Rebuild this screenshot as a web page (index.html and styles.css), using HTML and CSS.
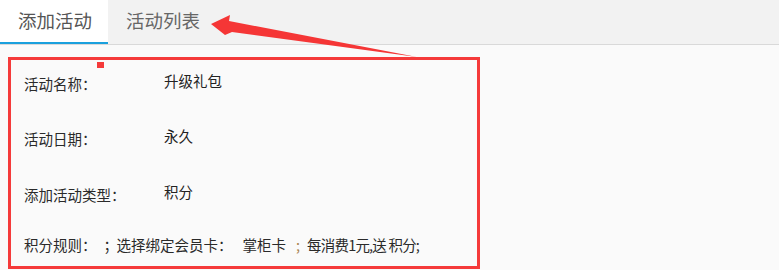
FILE: index.html
```html
<!DOCTYPE html>
<html lang="zh-CN">
<head>
<meta charset="utf-8">
<title>活动</title>
<link rel="stylesheet" href="styles.css">
</head>
<body>
<div class="page">
  <div class="tabs">
    <div class="tab active">添加活动</div>
    <div class="tab">活动列表</div>
  </div>
  <div class="content">
    <div class="row row-1">
      <div class="label">活动名称：</div>
      <div class="value">升级礼包</div>
    </div>
    <div class="row row-2">
      <div class="label">活动日期：</div>
      <div class="value">永久</div>
    </div>
    <div class="row row-3">
      <div class="label">添加活动类型：</div>
      <div class="value">积分</div>
    </div>
    <div class="row row-4">
      <div class="rule"><span>积分规则：</span><span class="sep1">；</span><span>选择绑定会员卡：</span><span class="card">掌柜卡</span><span class="sep2">;</span><span class="tail">每消费1元,送 积分;</span></div>
    </div>
  </div>
  <div class="mark-box"></div>
  <div class="mark-dot"></div>
  <svg class="mark-arrow" width="779" height="270" viewBox="0 0 779 270">
    <polygon points="211,24 230,15 229,21 417,57 232,32 225,35" fill="#f53636"/>
  </svg>
</div>
</body>
</html>
```
FILE: styles.css
```css
html, body {
  margin: 0;
  padding: 0;
  background: #fafafa;
}
.page {
  position: relative;
  width: 779px;
  height: 270px;
  overflow: hidden;
  font-family: "Noto Sans CJK SC", "Noto Sans", sans-serif;
}
.tabs {
  display: flex;
  height: 44px;
  background: #f2f2f2;
  border-bottom: 1px solid #d9d9d9;
}
.tab {
  box-sizing: border-box;
  height: 44px;
  padding: 0 18px;
  font-size: 18.5px;
  line-height: 40px;
  color: #666;
  white-space: nowrap;
}
.tab.active {
  width: 108px;
  background: #fff;
  border-bottom: 2px solid #1aa0dd;
  color: #555;
}
.content {
  padding: 26px 0 0 24px;
  color: #2a2a2a;
  font-size: 14.5px;
}
.row {
  display: flex;
  align-items: flex-start;
}
.row-1 { height: 55px; }
.row-2 { height: 56px; }
.row-3 { height: 50px; }
.label {
  width: 140px;
  padding-top: 3px;
  line-height: 20px;
}
.value {
  line-height: 20px;
  color: #222;
}
.rule {
  padding-top: 3px;
  line-height: 20px;
  white-space: pre;
}
.sep1 {
  display: inline-block;
  width: 13px;
  margin-left: 7px;
  overflow: hidden;
  vertical-align: top;
}
.card {
  margin-left: 10px;
}
.sep2 {
  margin-left: 10px;
  margin-right: 7px;
  color: #a8824f;
}
.tail {
  letter-spacing: -0.8px;
}
.mark-box {
  position: absolute;
  left: 8px;
  top: 57px;
  width: 466px;
  height: 206px;
  border: 3px solid #f53a3a;
}
.mark-dot {
  position: absolute;
  left: 97px;
  top: 62px;
  width: 7px;
  height: 6px;
  background: #f53a3a;
}
.mark-arrow {
  position: absolute;
  left: 0;
  top: 0;
}
```
